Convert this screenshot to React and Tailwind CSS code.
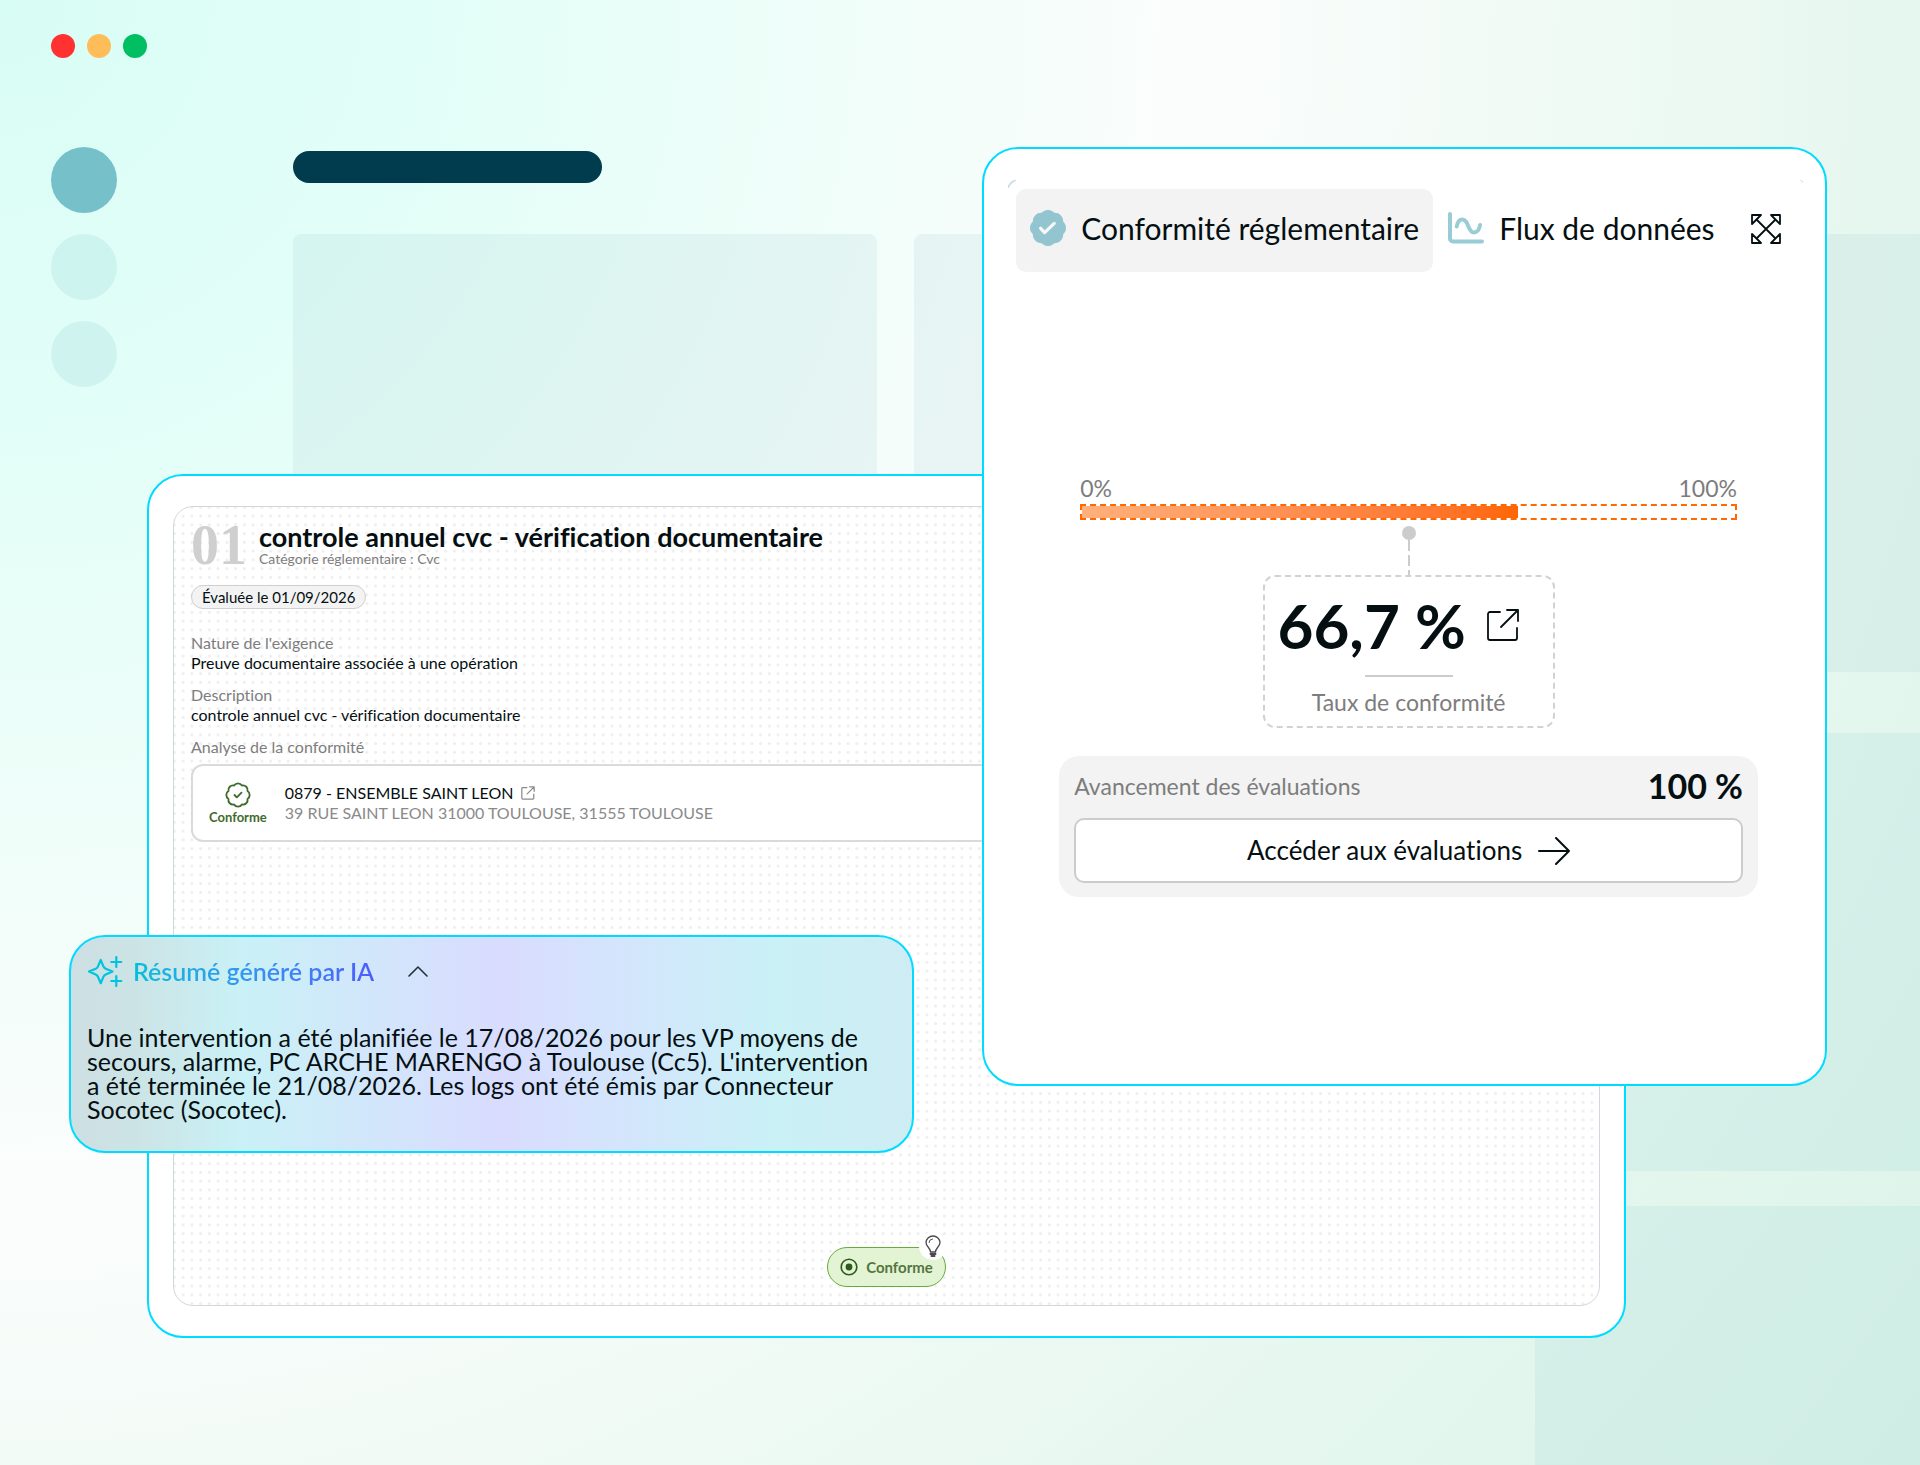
import { BadgeCheck } from 'lucide-react';

const requirements = [
  { label: "Nature de l'exigence", value: 'Preuve documentaire associée à une opération' },
  { label: 'Description', value: 'controle annuel cvc - vérification documentaire' },
];

const rate = 66.7;

function SealIcon() {
  return (
    <svg className="size-9 shrink-0" viewBox="1 1 22 22" fill="none" strokeLinecap="round" strokeLinejoin="round">
      <path
        d="M3.85 8.62a4 4 0 0 1 4.78-4.77 4 4 0 0 1 6.74 0 4 4 0 0 1 4.78 4.78 4 4 0 0 1 0 6.74 4 4 0 0 1-4.77 4.78 4 4 0 0 1-6.75 0 4 4 0 0 1-4.78-4.77 4 4 0 0 1 0-6.76Z"
        fill="#93c5d0"
        stroke="#93c5d0"
        strokeWidth="2"
      />
      <path d="m7.500 12.200 2.400 2.600 5.900-5.600" stroke="#f5f8f9" strokeWidth="2" />
    </svg>
  );
}

function ChartIcon() {
  return (
    <svg className="h-[34px] w-9 shrink-0" viewBox="0 0 36 34" fill="none" stroke="#9accd6" strokeWidth="4" strokeLinecap="round">
      <path d="M2 3v24.500a3 3 0 0 0 3 3h29" />
      <path d="M8.700 15.500c.8-4.500 2.800-7 5.600-7 6.500 0 5.500 13 11.500 13 3 0 5.500-3 6.300-7.500" />
    </svg>
  );
}

function ExpandIcon() {
  return (
    <svg className="size-8" viewBox="0 0 32 32" fill="none" stroke="currentColor" strokeWidth="1.8" strokeLinejoin="round">
      <path d="M2 2h9L2 11ZM30 2h-9l9 9ZM2 30h9l-9-9ZM30 30h-9l9-9Z" />
      <path d="m6.500 6.500 19 19M25.500 6.500l-19 19" />
    </svg>
  );
}

function ExternalIcon({ className, strokeWidth }) {
  return (
    <svg className={className} viewBox="0 0 34 34" fill="none" stroke="currentColor" strokeWidth={strokeWidth} strokeLinecap="round" strokeLinejoin="round">
      <path d="M14 4H4a2 2 0 0 0-2 2v24a2 2 0 0 0 2 2h25a2 2 0 0 0 2-2V20" />
      <path d="M15 19 32 2M21 2h11v11" />
    </svg>
  );
}

function SparklesIcon() {
  return (
    <svg className="h-8 w-9 shrink-0" viewBox="0 0 36 32" fill="none" stroke="#00c3de" strokeWidth="2.2" strokeLinecap="round" strokeLinejoin="round">
      <path d="m13.700 5 2.800 6.600q.8 1.600 2.200 2.200l6.800 2.800-6.800 2.800q-1.600.8-2.200 2.200l-2.800 6.600-2.800-6.600q-.8-1.600-2.200-2.200L2 16.600l6.700-2.800q1.600-.8 2.200-2.200Z" />
      <path d="M29.300 2v10M24.300 7h10M29.300 21v10M24.300 26h10" />
    </svg>
  );
}

function BulbIcon() {
  return (
    <svg className="h-[22px] w-4" viewBox="0 0 16 22" fill="none" stroke="#4b4b4b" strokeWidth="1.3" strokeLinecap="round">
      <path d="M5.500 17C5.500 13 1 11.500 1 7.500a7 6.500 0 0 1 14 0C15 11.500 10.500 13 10.500 17Z" />
      <path d="M4 7.500A4 3.500 0 0 1 7.500 4" strokeWidth="1" />
      <path d="M5.500 19h5M6.500 21h3" strokeWidth="2" />
    </svg>
  );
}

function Backdrop() {
  return (
    <div className="flex flex-1 flex-col" aria-hidden="true">
      <div className="flex gap-3 pt-[34px] pl-[51px]">
        <span className="size-6 rounded-full bg-[#ff3131]" />
        <span className="size-6 rounded-full bg-[#ffbd59]" />
        <span className="size-6 rounded-full bg-[#00bf63]" />
      </div>

      <div className="flex flex-1 pt-[89px] pl-[51px]">
        <div className="flex w-[242px] shrink-0 flex-col gap-[21px]">
          <span className="size-[66px] rounded-full bg-[#76c0ca]" />
          <span className="size-[66px] rounded-full bg-[#76c0ca]/16" />
          <span className="size-[66px] rounded-full bg-[#76c0ca]/16" />
        </div>

        <div className="flex flex-1 flex-col pt-1">
          <div className="h-8 w-[309px] rounded-full bg-[#003c4d]" />
          <div className="mt-[51px] grid grid-cols-[585fr_585fr_385fr] gap-x-[37px]">
            <div className="h-[438px] rounded-lg bg-[#80b8c8]/12" />
            <div className="h-[438px] rounded-lg bg-[#80b8c8]/12" />
            <div className="h-[438px] rounded-l-lg bg-[#80b8c8]/12" />
          </div>
          <div className="mt-[61px] grid grid-cols-[585fr_585fr_385fr] gap-x-[37px]">
            <div className="h-[438px] rounded-lg bg-[#76c0ca]/12" />
            <div className="h-[438px] rounded-lg bg-[#76c0ca]/12" />
            <div className="h-[438px] rounded-l-lg bg-[#76c0ca]/12" />
          </div>
          <div className="mt-[35px] grid flex-1 grid-cols-[585fr_585fr_385fr] gap-x-[37px]">
            <div className="col-start-3 bg-[#76c0ca]/12" />
          </div>
        </div>
      </div>
    </div>
  );
}

function RequirementWindow() {
  return (
    <section className="absolute top-[474px] right-[294px] left-[147px] flex min-h-[864px] flex-col rounded-[36px] border-2 border-[#00dcff] bg-white px-6 py-[30px]">
      <div className="flex flex-1 flex-col rounded-[20px] border border-[#d0d8df] bg-[radial-gradient(circle,#eeeeee_1px,transparent_2px)] bg-[size:calc(35px/4)_calc(35px/4)] bg-[position:-4px_-4px] px-[17px] pt-2.5 pb-[18px]">
        <div className="flex h-14 items-center gap-3">
          <span className="font-['Liberation_Serif',serif] text-[56px] leading-[56px] font-bold text-[#cfcfcf]">01</span>
          <div>
            <h1 className="text-[27px] leading-7 font-bold text-[#050f12]">controle annuel cvc - vérification documentaire</h1>
            <p className="text-sm leading-4 text-[#7d7d7d]">Catégorie réglementaire : Cvc</p>
          </div>
        </div>

        <span className="mt-3 flex h-6 items-center self-start rounded-full border border-[#cfcfcf] bg-[#f3f3f3] px-2.5 text-[15px]">
          Évaluée le 01/09/2026
        </span>

        <dl className="mt-6 flex flex-col gap-3 text-base leading-5">
          {requirements.map((item) => (
            <div key={item.label}>
              <dt className="text-[#7d7d7d]">{item.label}</dt>
              <dd>{item.value}</dd>
            </div>
          ))}
        </dl>

        <h2 className="mt-3 text-base leading-5 text-[#7d7d7d]">Analyse de la conformité</h2>
        <div className="mt-[7px] flex items-center gap-[18px] rounded-xl border-2 border-[#dadada] bg-white px-4 py-[15px]">
          <div className="flex flex-col items-center text-[#3f6b2c]">
            <BadgeCheck className="size-7" strokeWidth={1.6} />
            <span className="text-[13px] leading-4 font-bold">Conforme</span>
          </div>
          <div className="text-base leading-5">
            <a href="#site" className="flex items-center gap-2">
              0879 - ENSEMBLE SAINT LEON
              <ExternalIcon className="size-3.5 text-[#8a8a8a]" strokeWidth={3} />
            </a>
            <p className="text-[#8a8a8a]">39 RUE SAINT LEON 31000 TOULOUSE, 31555 TOULOUSE</p>
          </div>
        </div>

        <div className="relative mt-auto flex h-10 items-center gap-2 self-center rounded-full border border-[#63ad3a] bg-[#e3f4d5] px-3 text-[15px] font-bold text-[#55753f]">
          <svg className="size-[18px]" viewBox="0 0 18 18">
            <circle cx="9" cy="9" r="7.8" fill="none" stroke="#2f5a1c" strokeWidth="1.6" />
            <circle cx="9" cy="9" r="3.4" fill="#2f5a1c" />
          </svg>
          Conforme
          <span className="absolute -top-4 -right-0.5 flex size-7 items-center justify-center rounded-full bg-white">
            <BulbIcon />
          </span>
        </div>
      </div>
    </section>
  );
}

function ComplianceWindow() {
  return (
    <section className="absolute top-[147px] right-[93px] flex min-h-[939px] w-[44%] flex-col rounded-[36px] border-2 border-[#00dcff] bg-white">
      <svg className="absolute top-[31px] left-6 size-2" viewBox="0 0 8 8" fill="none" stroke="#cfdde4" strokeWidth="2">
        <path d="M0 8Q2 2 8 0" />
      </svg>
      <svg className="absolute top-[31px] right-[22px] size-1" viewBox="0 0 4 4" fill="none" stroke="#cfdde4" strokeWidth="1">
        <path d="M1 0q2 0 3 3" />
      </svg>

      <div className="flex pr-[31px] pl-8 pt-10">
        <div className="flex" role="tablist">
          <button type="button" role="tab" aria-selected="true" className="flex h-[83px] items-center gap-[15px] rounded-[10px] bg-[#f3f3f3] px-[14px] pb-1.5 text-[30px] leading-9">
            <SealIcon />
            Conformité réglementaire
          </button>
          <button type="button" role="tab" aria-selected="false" className="flex h-[83px] items-center gap-[15px] px-[15px] pb-1.5 text-[30px] leading-9">
            <ChartIcon />
            Flux de données
          </button>
        </div>
        <button type="button" aria-label="Agrandir" className="ml-auto px-3 pb-1">
          <ExpandIcon />
        </button>
      </div>

      <div className="flex flex-1 flex-col justify-center pt-[15px] pr-[67px] pl-[75px]">
        <div className="flex flex-col items-center px-[21px]">
          <div className="flex w-full justify-between text-[23px] leading-7 text-[#7d7d7d]">
            <span>0%</span>
            <span>100%</span>
          </div>
          <div className="mt-0.5 h-4 w-full border-2 border-dashed border-[#ff6a00]">
            <div className="h-3 bg-linear-to-r from-[#ffb07c] to-[#ff6600]" style={{ width: `${rate}%` }} />
          </div>
          <span className="mt-1.5 size-3.5 rounded-full bg-[#cccccc]" />
          <svg className="h-[35px] w-0.5" viewBox="0 0 2 35" stroke="#cccccc" strokeWidth="2" strokeDasharray="11 4">
            <path d="M1 0v35" />
          </svg>
          <div className="flex w-[292px] flex-col items-center rounded-xl border-2 border-dashed border-[#d2d2d2] pt-4 pb-[10px]">
            <a href="#taux" className="flex items-center gap-5 pr-5 text-[62px] leading-16 font-bold">
              66,7 %
              <ExternalIcon className="size-[34px]" strokeWidth={1.800} />
            </a>
            <span className="mt-[18px] h-0.5 w-[88px] bg-[#cccccc]" />
            <span className="mt-[11px] text-[23px] leading-7 text-[#7d7d7d]">Taux de conformité</span>
          </div>
        </div>

        <div className="mt-7 rounded-[20px] bg-[#f3f3f3] px-[15px] pt-3 pb-[14px]">
          <div className="flex items-center justify-between leading-9">
            <span className="text-[23px] text-[#7d7d7d]">Avancement des évaluations</span>
            <span className="text-[34px] font-bold">100 %</span>
          </div>
          <button type="button" className="mt-[14px] flex h-[65px] w-full items-center justify-center gap-4 rounded-[10px] border-2 border-[#cccccc] bg-white text-[26px]">
            Accéder aux évaluations
            <svg className="h-7 w-8" viewBox="0 0 32 28" fill="none" stroke="currentColor" strokeWidth="2" strokeLinecap="round" strokeLinejoin="round">
              <path d="M1 14h30M18 1l13 13-13 13" />
            </svg>
          </button>
        </div>
      </div>
    </section>
  );
}

function SummaryCard() {
  return (
    <section className="absolute top-[935px] left-[69px] w-[44%] rounded-[36px] border-2 border-[#00dcff] bg-linear-[90deg,#cddfe3_0%,#cce4e6_8%,#c9f1f6_20%,#d2e6fb_36%,#d9dcff_51%,#d3e6fc_67%,#c9f1f6_84%,#cfecf4_100%] pt-[18px] pr-7 pb-[30px] pl-4">
      <button type="button" aria-expanded="true" className="flex items-center gap-2.5 text-[25px] leading-8 font-semibold">
        <SparklesIcon />
        <span className="bg-linear-to-r from-[#00bfdc] to-[#4b5cff] bg-clip-text text-transparent">Résumé généré par IA</span>
        <svg className="ml-6 h-3 w-5" viewBox="0 0 20 12" fill="none" stroke="#20333a" strokeWidth="1.6" strokeLinecap="round" strokeLinejoin="round">
          <path d="m1 11 9-9 9 9" />
        </svg>
      </button>
      <p className="mt-[38px] text-[25px] leading-6">
        Une intervention a été planifiée le 17/08/2026 pour les VP moyens de secours, alarme, PC ARCHE MARENGO à Toulouse
        (Cc5). L'intervention a été terminée le 21/08/2026. Les logs ont été émis par Connecteur Socotec (Socotec).
      </p>
    </section>
  );
}

export default function App() {
  return (
    <main className="relative flex min-h-screen flex-col overflow-hidden bg-[radial-gradient(circle_at_0_0,#d8fdf5_0px,#e2fef8_420px,#e8fef8_600px,#fbfdfc_1200px,#e5f7ee_1920px,#dcf4e9_2400px)] font-['Lato','Open_Sans',sans-serif] text-[#050f12] [font-variant-ligatures:none]">
      <Backdrop />
      <RequirementWindow />
      <ComplianceWindow />
      <SummaryCard />
    </main>
  );
}
